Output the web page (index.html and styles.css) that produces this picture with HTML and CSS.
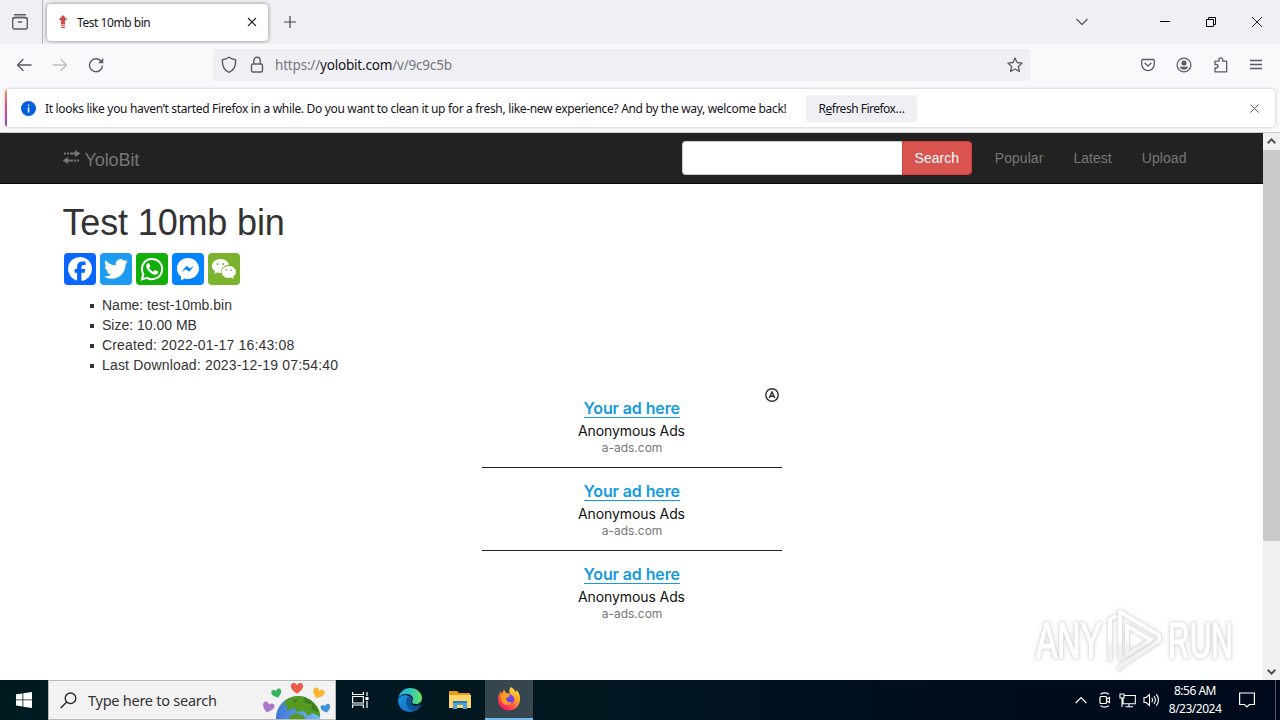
FILE: index.html
```html
<!DOCTYPE html>
<html lang="en">
<head>
    <meta charset="UTF-8">
    <meta name="viewport" content="width=device-width, initial-scale=1.0">
    <title>Test 10mb bin</title>
    <link rel="stylesheet" href="styles.css">
</head>
<body>

<div class="tabbar">
    <div class="tab-view">
        <svg width="18" height="18" viewBox="0 0 18 18" fill="none" stroke="#5b5b66" stroke-width="1.4" stroke-linecap="round"><path d="M3.500 1.700h11"/><rect x="1.700" y="4.500" width="14.600" height="11.500" rx="2"/><path d="M2 5.500q1-1 3-1h8q2 0 3 1M7.300 9h3.400"/></svg>
    </div>
    <div class="tab">
        <svg class="favicon" width="10" height="14" viewBox="0 0 10 14" fill="#d24a47"><path d="M5 0l4.500 5H7v4.500H3V5H.5zM3 10.200h4v1H3zM3 12h4v1H3z"/></svg>
        <span class="tab-title">Test 10mb bin</span>
        <svg width="10" height="10" viewBox="0 0 10 10" stroke="#222" stroke-width="1.100"><path d="M1 1l8 8M9 1l-8 8"/></svg>
    </div>
    <svg class="new-tab" width="12" height="12" viewBox="0 0 12 12" stroke="#444450" stroke-width="1.200"><path d="M6 0v12M0 6h12"/></svg>
    <div class="window-buttons">
        <svg class="list-tabs" width="14" height="8" viewBox="0 0 14 8" fill="none" stroke="#5b5b66" stroke-width="1.300"><path d="M1.500 1L7 6.500 12.500 1"/></svg>
        <svg width="10" height="10" viewBox="0 0 10 10" stroke="#000"><path d="M0 4.500h10"/></svg>
        <svg width="10" height="10" viewBox="0 0 10 10" fill="none" stroke="#000"><path d="M.5 2.500h7v7h-7zM2.500 2.500v-2h7v7h-2"/></svg>
        <svg width="10" height="10" viewBox="0 0 10 10" stroke="#222"><path d="M0 0l10 10M10 0L0 10"/></svg>
    </div>
</div>

<div class="toolbar">
    <div class="nav-buttons">
        <svg width="16" height="14" viewBox="0 0 16 14" fill="none" stroke="#5b5b66" stroke-width="1.400" stroke-linecap="round" stroke-linejoin="round"><path d="M15 7H1.500M7 1.500L1.500 7 7 12.500"/></svg>
        <svg width="16" height="14" viewBox="0 0 16 14" fill="none" stroke="#bdbdc3" stroke-width="1.400" stroke-linecap="round" stroke-linejoin="round"><path d="M1 7h13.500M9 1.500L14.500 7 9 12.500"/></svg>
        <svg width="16" height="16" viewBox="0 0 16 16" fill="none" stroke="#5b5b66" stroke-width="1.400"><path d="M13.300 4.500A6.500 6.500 0 1 0 14.500 8.500"/><path d="M15.300 1v5.200h-5.200z" fill="#5b5b66" stroke="none"/></svg>
    </div>
    <div class="urlbar">
        <svg class="shield" width="16" height="18" viewBox="0 0 16 18" fill="none" stroke="#5b5b66" stroke-width="1.400" stroke-linejoin="round"><path d="M8 1.200Q11 3.300 14.600 3.700C15 10 12.500 14.500 8 16.300 3.500 14.500 1 10 1.400 3.700Q5 3.300 8 1.200z"/></svg>
        <svg class="lock" width="14" height="18" viewBox="0 0 14 18" fill="none" stroke="#5b5b66" stroke-width="1.400"><rect x="1.500" y="8" width="11" height="8" rx="1.500"/><path d="M3.800 8V4.500a3.200 3.200 0 0 1 6.400 0V8"/></svg>
        <span class="url">https://<b>yolobit.com</b>/v/9c9c5b</span>
        <svg class="star" width="16" height="16" viewBox="0 0 16 16" fill="none" stroke="#5b5b66" stroke-width="1.300" stroke-linejoin="round"><path d="M8 .9l2.100 4.600 5 .6-3.700 3.400 1 5L8 12l-4.400 2.500 1-5L.9 6.100l5-.6z"/></svg>
    </div>
    <div class="toolbar-icons">
        <svg width="14" height="14" viewBox="0 0 14 14" fill="none" stroke="#5b5b66" stroke-width="1.300" stroke-linecap="round" stroke-linejoin="round"><path d="M2 1.500h10q1.300 0 1.300 1.300v3.500a6.300 6.300 0 0 1-12.600 0V2.800Q.7 1.500 2 1.500zM4 5.200l3 2.800 3-2.800"/></svg>
        <svg width="16" height="16" viewBox="0 0 16 16" fill="none" stroke="#5b5b66" stroke-width="1.300"><circle cx="8" cy="8" r="6.900"/><circle cx="8" cy="6" r="2.600" fill="#5b5b66" stroke="none"/><path d="M3.700 9.800h8.600q-1.300 3-4.300 3t-4.300-3z" fill="#5b5b66" stroke="none"/></svg>
        <svg width="16" height="16" viewBox="0 0 16 16" fill="none" stroke="#5b5b66" stroke-width="1.300" stroke-linejoin="round"><path d="M2 14.800V11h1.300a1.700 1.700 0 0 0 0-3.500H2V4.200h4V2.600a1.800 1.800 0 0 1 3.600 0v1.600h4.100v10.600z"/></svg>
        <svg width="12" height="12" viewBox="0 0 12 12" stroke="#5b5b66" stroke-width="1.300"><path d="M0 1.500h12M0 5.500h12M0 9.500h12"/></svg>
    </div>
</div>

<div class="notification-box">
    <div class="notification">
        <svg width="15" height="15" viewBox="0 0 15 15"><circle cx="7.500" cy="7.500" r="7.500" fill="#0060df"/><path d="M6.800 3.500h1.500V5H6.800zM6.800 6.300h1.500V11.500H6.800z" fill="#fff"/></svg>
        <span class="message">It looks like you haven’t started Firefox in a while. Do you want to clean it up for a fresh, like-new experience? And by the way, welcome back!</span>
        <button class="refresh">R<u>e</u>fresh Firefox…</button>
        <svg class="dismiss" width="9" height="9" viewBox="0 0 9 9" stroke="#5b5b66"><path d="M.5.5l8 8M8.500.5l-8 8"/></svg>
    </div>
</div>

<div class="viewport">
    <div class="page">
        <div class="navbar">
            <div class="container">
                <a class="brand">
                    <svg width="19" height="15" viewBox="0 0 19 15" fill="#777"><path d="M2 2.500h2v2H2zM5 2.500h2v2H5zM8 2.500h5V0l5.500 3.500L13 7V4.500H8zM17 9.500h-2v2h2zM14 9.500h-2v2h2zM11 9.500H6V7L.5 10.500 6 14v-2.500h5z"/></svg>
                    <span>YoloBit</span>
                </a>
                <form class="search">
                    <input type="text" aria-label="Search">
                    <button type="button">Search</button>
                </form>
                <a class="link">Popular</a>
                <a class="link">Latest</a>
                <a class="link">Upload</a>
            </div>
        </div>
        <div class="container content">
            <h1>Test 10mb bin</h1>
            <div class="share">
                <svg viewBox="0 0 32 32"><rect width="32" height="32" rx="4" fill="#0866ff"/><path fill="#fff" d="M28 16a12 12 0 1 0-14.900 11.650v-7.980h-2.470V16h2.470v-1.580c0-4.080 1.850-5.970 5.860-5.970.76 0 2.070.15 2.610.3v3.320c-.28-.03-.77-.04-1.390-.04-1.970 0-2.730.74-2.730 2.680V16h3.920l-.67 3.670h-3.250v8.240A12 12 0 0 0 28 16z"/></svg>
                <svg viewBox="0 0 32 32"><rect width="32" height="32" rx="4" fill="#1d9bf0"/><path fill="#fff" d="M28 8.560a9.900 9.900 0 0 1-2.830.77 4.930 4.930 0 0 0 2.170-2.720 9.900 9.900 0 0 1-3.130 1.190 4.920 4.920 0 0 0-8.390 4.490A13.980 13.980 0 0 1 5.670 7.150a4.930 4.930 0 0 0 1.520 6.570 4.900 4.900 0 0 1-2.230-.61v.06a4.930 4.930 0 0 0 3.950 4.830 4.900 4.900 0 0 1-2.220.08 4.930 4.930 0 0 0 4.600 3.420A9.880 9.880 0 0 1 4 23.540a13.940 13.940 0 0 0 7.550 2.210c9.050 0 14-7.500 14-14v-.64A10 10 0 0 0 28 8.560z"/></svg>
                <svg viewBox="0 0 32 32"><rect width="32" height="32" rx="4" fill="#12af0a"/><path fill="none" stroke="#fff" stroke-width="2" d="M6 26.300l1.300-5.200A10.100 10.100 0 1 1 11 24.800z"/><path fill="#fff" d="M12.200 10.300c-.8 0-2 1.200-1.900 2.900.2 3.700 5.400 8.400 8.800 8.500 1.900 0 3.100-1.300 3.100-2.900 0-.5-2.800-1.800-3.200-1.700-.5.100-1.100 1.600-1.700 1.600-1 0-4-2.900-4.100-3.700 0-.5 1.100-1.200 1.100-1.700 0-.5-1-2.900-1.400-3z"/></svg>
                <svg viewBox="0 0 32 32"><rect width="32" height="32" rx="4" fill="#0084ff"/><path fill="#fff" d="M16 5C9.600 5 5 9.600 5 15.500c0 3.400 1.500 6.100 4 8v3.900l3.600-2c1.100.4 2.200.5 3.400.5 6.400 0 11-4.600 11-10.400S22.400 5 16 5z"/><path fill="#0084ff" d="M9.500 19l5-6.200 3.200 2.600 4.300-2.600-4.700 6-3.400-2.500z"/></svg>
                <svg viewBox="0 0 32 32"><rect width="32" height="32" rx="4" fill="#7bb32e"/><path fill="#fff" d="M12.500 6C7.800 6 4 9 4 13c0 2.300 1.200 4.200 3.100 5.500l-.8 2.600 3-1.500c1 .3 2 .5 3.200.5h.7c-.9-4.600 3-8.300 7.700-8.300C20.300 8.500 16.800 6 12.500 6z"/><path fill="#fff" d="M20.800 13c-4.100 0-7.200 2.700-7.200 6s3.100 6 7.200 6c.9 0 1.800-.2 2.600-.4l2.400 1.300-.6-2.200c1.700-1.200 2.800-2.800 2.800-4.700 0-3.300-3.200-6-7.200-6z"/><path fill="#7bb32e" d="M8.700 10.200h1.800V12H8.700zM14.300 10.200h1.800V12h-1.800zM17.600 16.300h1.500v1.500h-1.500zM22.400 16.300h1.500v1.500h-1.500z"/></svg>
            </div>
            <ul class="details">
                <li>Name: test-10mb.bin</li>
                <li>Size: 10.00 MB</li>
                <li class="date">Created: 2022-01-17 16:43:08</li>
                <li class="date">Last Download: 2023-12-19 07:54:40</li>
            </ul>
            <div class="ads">
                <svg class="ad-mark" width="14" height="14" viewBox="0 0 14 14" fill="none" stroke="#2b3036" stroke-width="1.400"><circle cx="7" cy="7" r="6.200"/><path d="M4.200 10L7 4l2.800 6M5.200 8.300h3.600"/></svg>
                <div class="ad"><a>Your ad here</a><p>Anonymous Ads</p><small>a-ads.com</small></div>
                <div class="ad"><a>Your ad here</a><p>Anonymous Ads</p><small>a-ads.com</small></div>
                <div class="ad"><a>Your ad here</a><p>Anonymous Ads</p><small>a-ads.com</small></div>
            </div>
        </div>
    </div>
    <div class="scrollbar">
        <svg width="9" height="6" viewBox="0 0 9 6" fill="none" stroke="#505050" stroke-width="2"><path d="M.7 5.200L4.500 1.400l3.800 3.800"/></svg>
        <div class="thumb"></div>
        <svg width="9" height="6" viewBox="0 0 9 6" fill="none" stroke="#505050" stroke-width="2"><path d="M.7.8l3.800 3.800L8.300.8"/></svg>
    </div>
    <div class="watermark">
        <span class="any">ANY</span>
        <svg width="58" height="64" viewBox="0 0 58 64" fill="none" stroke-width="4" stroke-linejoin="round">
            <defs>
                <linearGradient id="fade" gradientUnits="userSpaceOnUse" x1="0" y1="30" x2="0" y2="36"><stop offset="0" stop-color="#fff"/><stop offset="1" stop-color="#f2f2f2"/></linearGradient>
            </defs>
            <path stroke="url(#fade)" d="M15 50V3l39 23v6L17 56l-4 5M22 44V17l24 14-24 15zM5 52V10l7-3"/>
        </svg>
        <span class="run">RUN</span>
    </div>
</div>

<div class="taskbar">
    <div class="start">
        <svg width="16" height="16" viewBox="0 0 16 16" fill="#fff"><path d="M0 2.300L6.500 1.400v6.100H0zM7.300 1.300L16 0v7.500H7.300zM0 8.300h6.500v6.200L0 13.600zM7.300 8.300H16V16l-8.700-1.300z"/></svg>
    </div>
    <div class="search-box">
        <svg class="lens" width="17" height="17" viewBox="0 0 17 17" fill="none" stroke="#222" stroke-width="1.300"><circle cx="10.500" cy="6.300" r="5.300"/><path d="M6.700 10L.7 16"/></svg>
        <span>Type here to search</span>
        <svg class="earth" width="72" height="38" viewBox="0 0 72 38">
            <defs>
                <linearGradient id="sea" x1="0" x2="1"><stop offset="0" stop-color="#3f77d8"/><stop offset="1" stop-color="#70bbf5"/></linearGradient>
                <path id="heart" d="M0 5C-4 2-6.500 0-6.500-3.200-6.500-6.500-2-7.500 0-4 2-7.500 6.500-6.500 6.500-3.200 6.500 0 4 2 0 5z"/>
            </defs>
            <circle cx="37" cy="37" r="22" fill="url(#sea)"/>
            <path fill="#559b23" d="M25 19q9-6 19-3l9 6q7 7 6 14l-7-4-5 3-4-5-7 1-3-4-8 3 2-6-5 1zM28 35l7-3 8 3 2 4H29z"/>
            <path fill="#3d7f1c" d="M43 16q12 4 15 16l-8-4 1-5-7-1zM31 18l6 1-3 3z"/>
            <use href="#heart" transform="translate(36 8) scale(.95)" fill="#ef5b49"/>
            <use href="#heart" transform="translate(16 13) rotate(-18) scale(.78)" fill="#37b25d"/>
            <use href="#heart" transform="translate(57 13) rotate(22) scale(.9)" fill="#f9b731"/>
            <use href="#heart" transform="translate(7 27) rotate(18) scale(.9)" fill="#ad78cb"/>
            <use href="#heart" transform="translate(65 28) rotate(-15) scale(.75)" fill="#4393d8"/>
        </svg>
    </div>
    <div class="task">
        <svg width="18" height="16" viewBox="0 0 18 16" fill="none" stroke="#fff" stroke-width="1.200"><path d="M.6 0v2.500h10.800V0M.6 4.500h10.800v6.500H.6zM.6 16v-3h10.800v3M15 0v4M15 9v7"/><path fill="#fff" stroke="none" d="M13.500 5h3v3h-3z"/></svg>
    </div>
    <div class="task">
        <svg width="24" height="24" viewBox="0 0 24 24">
            <defs>
                <linearGradient id="edge-top" x1="0" x2="1"><stop offset="0" stop-color="#1fa7e4"/><stop offset=".55" stop-color="#35c9bb"/><stop offset="1" stop-color="#6de35c"/></linearGradient>
                <linearGradient id="edge-low" x1="0" y1="0" x2="1" y2="1"><stop offset="0" stop-color="#1a94e0"/><stop offset="1" stop-color="#1166bb"/></linearGradient>
            </defs>
            <path fill="url(#edge-low)" d="M0 12Q2 7 8 7q5 1 6 5c-2 1-1 6 4 6 2 0 4-1 5-1-2 4-6 7-11 7C5 24 0 19 0 12z"/>
            <path fill="#0c5296" d="M9 10c-3 6 2 13 8 13 2-.5 4.500-2.500 6-6-5 2.500-10 1-10-4 0-1 .5-2 1-2.500C13 8.500 10 8 9 10z"/>
            <path fill="url(#edge-top)" d="M0 12C1 4 6 0 12 0c7 0 12 5 12 10 0 4-3 6-6 6s-4-1-4-2 1-1 1-3c0-3-3-5-7-5-4 0-7 2-8 6z"/>
        </svg>
    </div>
    <div class="task">
        <svg width="22" height="20" viewBox="0 0 22 20"><path fill="#e89a1c" d="M0 1h8l2 2h11v4H0z"/><path fill="#ffd768" d="M0 5h22v13H0z"/><path fill="#4aa3df" d="M4 11h14v8h-4v-4H8v4H4z"/><path fill="#2b7fbd" d="M4 11h14v2H4z"/></svg>
    </div>
    <div class="task active">
        <svg width="24" height="24" viewBox="0 0 24 24">
            <defs>
                <linearGradient id="flame" x1=".9" y1="0" x2=".2" y2="1"><stop offset="0" stop-color="#fff04e"/><stop offset=".45" stop-color="#ff9626"/><stop offset=".75" stop-color="#ff3f4d"/><stop offset="1" stop-color="#e6107e"/></linearGradient>
            </defs>
            <path fill="url(#flame)" d="M13.500 0c3 1 4 3 5 5 1-1 1-1 1-2 3 3 4 7 3.500 10.500C22 20 17.500 23.500 12 23.500 5.500 23.500 1 19 1 12.500 1 9 2.500 6 4 4l.5 3C5.500 5 6.500 4 7 2.500l2 3.500 4 .500c-1-2-1-4 .5-6.500z"/>
            <circle cx="12.500" cy="12.300" r="4.800" fill="#7542e5"/>
            <path fill="#ff9f22" d="M4 7.500q4-2 9 1c-1 2-3 1.500-4 3 0 3 3 4.500 6 3.500-2 4-8 4-10 0-1.500-2.500-1-5-1-7.500z"/>
        </svg>
    </div>
    <div class="tray">
        <svg width="12" height="8" viewBox="0 0 12 8" fill="none" stroke="#fff" stroke-width="1.200"><path d="M.7 7L6 1.500 11.300 7"/></svg>
        <svg width="12" height="16" viewBox="0 0 12 16" fill="none" stroke="#fff" stroke-width="1.200"><rect x="1" y="4.500" width="6.500" height="7" rx="1"/><path d="M7.500 7.300L10.500 5.500v5L7.500 9M1.500 2.200q4.200-2.600 8.400 0M1.500 13.800q4.200 2.600 8.400 0"/></svg>
        <svg width="17" height="15" viewBox="0 0 17 15" fill="none" stroke="#fff" stroke-width="1.100"><path d="M5.500 2.500h10.800v8.300H4V5.500M10 11v2.500M6.500 13.800H14M1 1h4v4H1zM3 5v9"/></svg>
        <svg width="17" height="14" viewBox="0 0 17 14" fill="none" stroke="#fff" stroke-width="1.100"><path d="M1 4.500h2.200L6.500 1.500v11L3.200 9.500H1zM8.800 4.800q1.400 2.200 0 4.400M11 3q2.800 4 0 8M13.300 1.200q4.300 5.800 0 11.600"/></svg>
        <div class="clock"><span>8:56 AM</span><span>8/23/2024</span></div>
        <svg width="16" height="16" viewBox="0 0 16 16" fill="none" stroke="#fff" stroke-width="1.200"><path d="M.6 1h14.800v11.500h-5L8 15l-2.400-2.500h-5z"/></svg>
        <div class="show-desktop"></div>
    </div>
</div>

</body>
</html>
```

FILE: styles.css
```css
* {
    box-sizing: border-box;
}
body {
    margin: 0;
    width: 1280px;
    height: 720px;
    overflow: hidden;
    display: flex;
    flex-direction: column;
    font-family: "Noto Sans", sans-serif;
    font-size: 12px;
    color: #15141a;
    background: #fff;
}
svg {
    display: block;
    flex: none;
}

/* Browser chrome */
.tabbar {
    height: 44px;
    display: flex;
    align-items: center;
    background: #f0f0f4;
}
.tab-view {
    width: 43px;
    height: 44px;
    padding: 13px 0 0 11px;
    border-right: 1px solid #b5b5bb;
}
.tab {
    width: 221px;
    height: 37px;
    margin-left: 4px;
    padding: 0 11px;
    display: flex;
    align-items: center;
    background: #fff;
    border-radius: 4px;
    box-shadow: 0 0 4px rgba(0, 0, 0, 0.45);
}
.tab-title {
    flex: 1;
    margin-left: 9px;
    font-size: 12px;
    letter-spacing: -0.45px;
}
.new-tab {
    margin-left: 16px;
}
.window-buttons {
    margin-left: auto;
    margin-right: 18px;
    display: flex;
    align-items: center;
    gap: 36px;
}
.list-tabs {
    margin-right: 35px;
}
.toolbar {
    height: 41px;
    display: flex;
    align-items: center;
    background: #f9f9fb;
}
.nav-buttons {
    width: 213px;
    padding-left: 16px;
    display: flex;
    align-items: center;
    gap: 20px;
}
.urlbar {
    width: 817px;
    height: 32px;
    padding: 0 7px 0 8px;
    display: flex;
    align-items: center;
    background: #f0f0f4;
    border-radius: 2px;
}
.lock {
    margin-left: 13px;
}
.url {
    flex: 1;
    margin-left: 11px;
    font-size: 13.5px;
    letter-spacing: -0.19px;
    color: #77777f;
}
.url b {
    font-weight: 400;
    color: #15141a;
}
.toolbar-icons {
    margin-left: auto;
    margin-right: 18px;
    display: flex;
    align-items: center;
    gap: 21px;
}
.notification-box {
    height: 48px;
    padding: 4px 5px 5px 5px;
    background: #f9f9fb;
    border-bottom: 1px solid #ccc;
}
.notification {
    height: 38px;
    padding: 0 16px;
    display: flex;
    align-items: center;
    background: linear-gradient(#ff9a4d, #d64a8a 45%, #8a4fc7) left / 2px 100% no-repeat #fff;
    border-radius: 4px;
    box-shadow: 0 0 3px rgba(0, 0, 0, 0.25);
}
.message {
    width: 742px;
    margin-left: 9px;
    white-space: nowrap;
    font-size: 12px;
    letter-spacing: -0.325px;
}
.refresh {
    width: 111px;
    height: 27px;
    margin-left: 19px;
    padding: 0;
    border: none;
    border-radius: 3px;
    background: #f0f0f4;
    font: 12px "Noto Sans", sans-serif;
    letter-spacing: -0.5px;
    color: #15141a;
}
.dismiss {
    margin-left: auto;
}

/* Web page */
.viewport {
    height: 547px;
    display: flex;
    position: relative;
}
.page {
    width: 1263px;
    font-family: "Liberation Sans", Arial, sans-serif;
    font-size: 14px;
    line-height: 20px;
    color: #333;
}
.navbar {
    height: 51px;
    background: #222;
    border-bottom: 1px solid #080808;
}
.container {
    width: 1170px;
    margin: 0 auto;
    padding: 0 15px;
}
.navbar .container {
    height: 50px;
    display: flex;
    align-items: center;
}
.brand {
    display: flex;
    align-items: center;
    gap: 4px;
    margin-right: auto;
    font-size: 18px;
    letter-spacing: -0.1px;
    color: #777;
}
.brand svg {
    margin-bottom: 2px;
}
.brand span {
    padding-top: 3px;
}
.search {
    display: flex;
    margin-right: 8px;
}
.search input {
    width: 220px;
    height: 34px;
    border: 1px solid #ccc;
    border-right: none;
    border-radius: 4px 0 0 4px;
    background: #fff;
}
.search button {
    width: 70px;
    height: 34px;
    padding: 0;
    border: 1px solid #d43f3a;
    border-radius: 0 4px 4px 0;
    background: #d9534f;
    font: 14px "Liberation Sans", Arial, sans-serif;
    color: #fff;
}
.link {
    padding: 0 15px;
    letter-spacing: 0.05px;
    color: #777;
}
.content {
    padding-top: 19px;
}
h1 {
    margin: 0 0 10px;
    padding-left: 1px;
    font-size: 36px;
    font-weight: 400;
    line-height: 40px;
    letter-spacing: -0.15px;
}
.share {
    display: flex;
    gap: 4px;
    padding-left: 2px;
}
.share svg {
    width: 32px;
    height: 32px;
}
.details {
    margin: 10px 0;
    padding-left: 40.5px;
    list-style: none;
}
.details li::before {
    content: "";
    display: inline-block;
    width: 4px;
    height: 4px;
    margin: 0 8px 2px -12px;
    background: #333;
}
.date {
    letter-spacing: 0.17px;
}
.ads {
    position: relative;
    width: 300px;
    margin: 0 auto;
    font-family: Inter, sans-serif;
    text-align: center;
}
.ad-mark {
    position: absolute;
    right: 3px;
    top: 3px;
}
.ad {
    height: 83px;
    padding-top: 15px;
    border-bottom: 1px solid #222;
}
.ad:last-child {
    border-bottom: none;
}
.ad a {
    display: block;
    width: 96px;
    margin: 0 auto;
    font-size: 16px;
    font-weight: 600;
    line-height: 17px;
    letter-spacing: -0.1px;
    white-space: nowrap;
    color: #149bdc;
    border-bottom: 1px solid #149bdc;
}
.ad p {
    margin: 4px 0 0;
    font-size: 14px;
    line-height: 17px;
    letter-spacing: -0.1px;
    color: #111;
}
.ad small {
    display: block;
    margin-top: 1px;
    padding-left: 1px;
    font-size: 12px;
    line-height: 16px;
    color: #777;
}
.scrollbar {
    width: 17px;
    padding: 5px 0;
    display: flex;
    flex-direction: column;
    align-items: center;
    justify-content: space-between;
    background: #f0f0f0;
}
.thumb {
    width: 17px;
    height: 391px;
    margin: 6px 0 auto;
    background: #c9c9c9;
}
.watermark {
    position: absolute;
    right: 48px;
    bottom: 7px;
    display: flex;
    align-items: center;
    gap: 5px;
    font: 50px/64px "Liberation Sans", Arial, sans-serif;
    filter: drop-shadow(0 0 1px #d0d0d0) drop-shadow(0 0 2px #dedede);
}
.any, .run {
    width: 64px;
    transform: scaleX(0.6);
    transform-origin: left;
    color: #fff;
    -webkit-text-stroke: 1.5px #fff;
}
.any {
    transform: scaleX(0.64);
}

/* Windows taskbar */
.taskbar {
    height: 40px;
    display: flex;
    background: linear-gradient(90deg, #001a22 0%, #001720 45%, #000c1c 80%, #000a1c 100%);
}
.start, .task {
    width: 48px;
    display: flex;
    align-items: center;
    justify-content: center;
}
.task {
    width: 50px;
}
.task:nth-child(3) {
    width: 49px;
}
.search-box {
    width: 288px;
    display: flex;
    align-items: center;
    background: #f2f2f2;
    border: 1px solid #b8b8b8;
    font-size: 14.5px;
    letter-spacing: -0.25px;
    color: #333;
}
.lens {
    margin: 0 11px 0 11px;
}
.earth {
    margin-left: auto;
    margin-right: 2px;
}
.task.active {
    width: 48px;
    background: #35464f;
    border-bottom: 2px solid #76b9ed;
}
.tray {
    margin-left: auto;
    display: flex;
    align-items: center;
    color: #fff;
}
.tray svg {
    margin-right: 7px;
}
.tray svg:first-child {
    margin-right: 12px;
}
.tray svg:nth-child(2) {
    margin-right: 8px;
}
.tray svg:nth-child(6) {
    margin-right: 20px;
}
.show-desktop {
    width: 5px;
    height: 40px;
    border-left: 1px solid #4b5560;
}
.clock {
    width: 52px;
    margin-left: 2px;
    margin-right: 18px;
    display: flex;
    flex-direction: column;
    align-items: center;
    font-size: 12px;
    line-height: 18px;
    letter-spacing: -0.5px;
    white-space: nowrap;
}
```
